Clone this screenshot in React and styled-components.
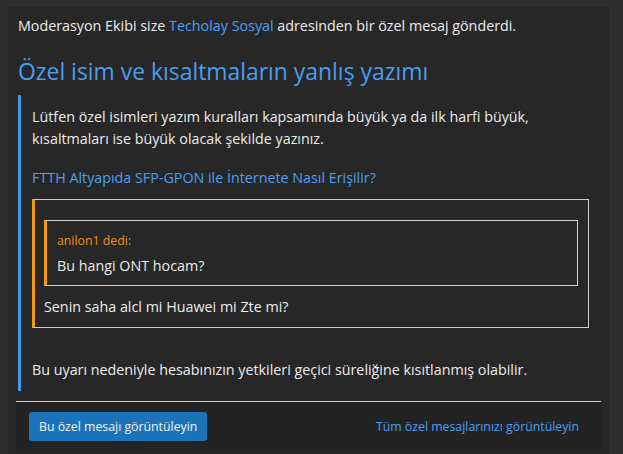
import React from 'react'
import styled, { createGlobalStyle } from 'styled-components'

const GlobalStyle = createGlobalStyle`
  html, body {
    margin: 0;
    padding: 0;
    background: #2e2e2e;
  }
  body {
    font-family: "Open Sans", "Noto Sans", sans-serif;
    font-size: 14.3px;
    color: #ececec;
  }
`

const Page = styled.div`
  padding: 7px 14px 0 8px;
  height: 447px;
  overflow: hidden;
`

const Card = styled.div`
  background: #272727;
  padding: 8px 8px 0 10px;
  height: 100%;
  box-sizing: border-box;
`

const Intro = styled.p`
  margin: 0;
  line-height: 22px;
`

const Link = styled.a`
  color: #4d9ef0;
  text-decoration: none;
`

const Title = styled.h2`
  margin: 20px 0 0;
  font-weight: 400;
  font-size: 22.9px;
  line-height: 30px;
  color: #4a9cf0;
`

const Notice = styled.div`
  margin: 8px 0 0;
  border-left: 3px solid #3b9bea;
  padding: 11px 10px 10px 11px;
`

const Para = styled.p`
  margin: ${p => p.$top || 0}px 0 0;
  line-height: 22px;
`

const Quote = styled.div`
  margin-top: 10px;
  border: 1px solid #cfcfcf;
  border-left: 3px solid #f39a12;
  padding: 20px 10px 9px 9px;
  margin-right: 2px;
`

const InnerQuote = styled.div`
  border: 1px solid #cfcfcf;
  border-left: 3px solid #f39a12;
  padding: 9px 10px 8px 10px;
`

const Author = styled.div`
  color: #f0901a;
  font-size: 12.3px;
  line-height: 22px;
`

const QuoteText = styled.div`
  margin-top: ${p => p.$top || 0}px;
  line-height: 22px;
`

const Footer = styled.div`
  margin: 10px 0 0 -2px;
  border-top: 1px solid #d0d0d0;
  background: #232323;
  display: flex;
  align-items: center;
  justify-content: space-between;
  padding: 10px 22px 10px 13px;
  font-size: 12.3px;
`

const Button = styled.button`
  font-family: inherit;
  font-size: 12.3px;
  color: #f2f2f2;
  background: #1b74ba;
  border: none;
  border-radius: 3px;
  height: 29px;
  padding: 0 10px;
  cursor: pointer;
`

export default function App() {
  return (
    <>
      <GlobalStyle />
      <Page>
        <Card>
          <Intro>
            Moderasyon Ekibi size <Link href="#">Techolay Sosyal</Link> adresinden bir özel mesaj gönderdi.
          </Intro>
          <Title>Özel isim ve kısaltmaların yanlış yazımı</Title>
          <Notice>
            <Para>
              Lütfen özel isimleri yazım kuralları kapsamında büyük ya da ilk harfi büyük,
              <br />
              kısaltmaları ise büyük olacak şekilde yazınız.
            </Para>
            <Para $top={17}>
              <Link href="#">FTTH Altyapıda SFP-GPON ile İnternete Nasıl Erişilir?</Link>
            </Para>
            <Quote>
              <InnerQuote>
                <Author>anilon1 dedi:</Author>
                <QuoteText $top={3}>Bu hangi ONT hocam?</QuoteText>
              </InnerQuote>
              <QuoteText $top={10}>Senin saha alcl mi Huawei mi Zte mi?</QuoteText>
            </Quote>
            <Para $top={31}>Bu uyarı nedeniyle hesabınızın yetkileri geçici süreliğine kısıtlanmış olabilir.</Para>
          </Notice>
          <Footer>
            <Button>Bu özel mesajı görüntüleyin</Button>
            <Link href="#">Tüm özel mesajlarınızı görüntüleyin</Link>
          </Footer>
        </Card>
      </Page>
    </>
  )
}
